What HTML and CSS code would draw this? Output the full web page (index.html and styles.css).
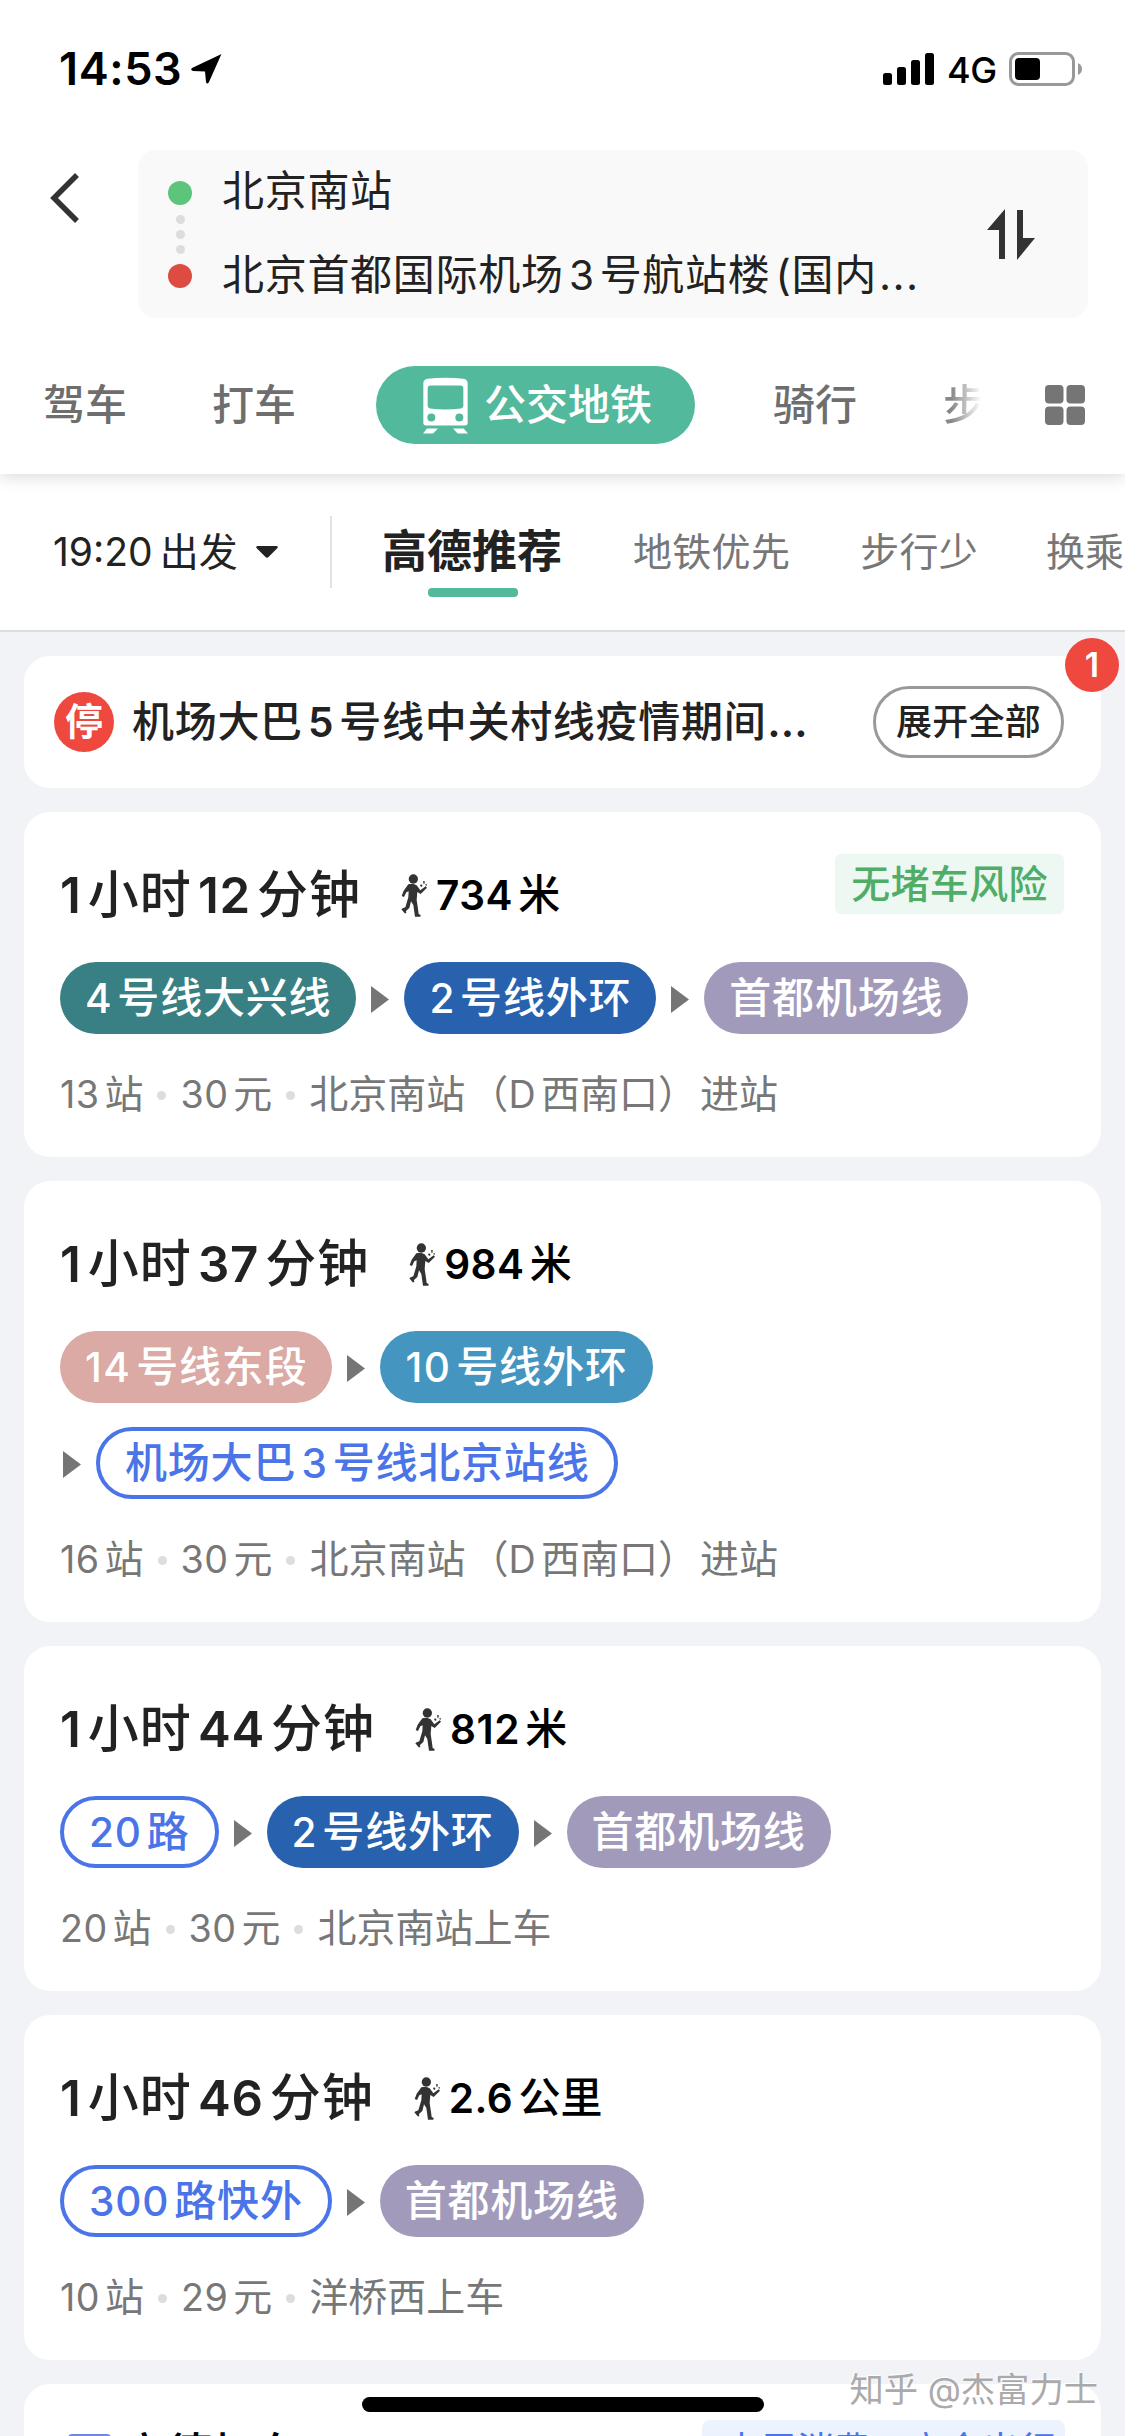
FILE: index.html
```html
<!DOCTYPE html>
<html lang="zh-CN">
<head>
<meta charset="utf-8">
<title>公交地铁路线</title>
<link rel="stylesheet" href="styles.css">
</head>
<body>
<svg class="defs" width="0" height="0">
  <symbol id="walker" viewBox="75 70 81 129">
    <circle cx="112" cy="85" r="14"/>
    <path d="M97 101Q111 96 122 104L133 119 149 107 153 111 134 130 124 124 122 148 126 175 128 190 134 193 133 198H117L112 163 105 152 100 172 90 181 91 188 86 188 76 176 80 173 88 170 97 140 98 122 91 125 84 139 77 136 83 120Z"/>
    <path d="M132 103l4-2 4 5-5 3zM141 92l5-1 0 7-3 3zM147 102l5-3 0 7z"/>
  </symbol>
  <symbol id="next" viewBox="0 0 18 27"><path d="M0 0L18 13.500 0 27Z"/></symbol>
</svg>
<div class="screen">
  <header class="header">
    <div class="status">
      <span class="clock">14:53</span>
      <svg class="loc" viewBox="0 0 31 30"><path d="M30 1Q31 0 29.500 .5L1 14Q-1 16 2 17L14 17.500 15 28Q16 31 18 28Z"/></svg>
      <svg class="signal" viewBox="0 0 51 32"><rect x="0" y="20" width="9" height="12" rx="2.500"/><rect x="14" y="14" width="9" height="18" rx="2.500"/><rect x="28" y="7" width="9" height="25" rx="2.500"/><rect x="42" y="0" width="9" height="32" rx="2.500"/></svg>
      <span class="net">4G</span>
      <svg class="battery" viewBox="0 0 74 34"><rect x="1.500" y="1.500" width="63" height="31" rx="8" fill="none" stroke="#999" stroke-width="3"/><rect x="6" y="6" width="25" height="22" rx="4"/><path d="M69 11Q73 13 73 17T69 23Z" fill="#999"/></svg>
    </div>
    <div class="search">
      <svg class="back" viewBox="0 0 30 50"><path d="M27 2L4 25 27 48" fill="none" stroke="#333" stroke-width="5.500"/></svg>
      <div class="route">
        <div class="dots"><i class="dot green"></i><i class="dot tiny"></i><i class="dot tiny"></i><i class="dot tiny"></i><i class="dot red"></i></div>
        <div class="places">
          <div class="place">北京南站</div>
          <div class="place">北京首都国际机场<span class="n">3</span>号航站楼<span class="paren">(</span>国内<span class="dots3">...</span></div>
        </div>
        <svg class="swap" viewBox="0 0 48 52"><path d="M18 0V50H12V21H0ZM30 1H36V29H48L30 51Z"/></svg>
      </div>
    </div>
    <nav class="modes">
      <span class="mode">驾车</span>
      <span class="mode m2">打车</span>
      <span class="mode active"><svg class="train" viewBox="128 50 135 170"><path fill-rule="evenodd" d="M129 68Q129 57 142 55Q195 48 249 55Q262 57 262 68V187Q262 195 254 195H137Q129 195 129 187ZM150 75Q142 75 142 83V136Q142 143 149 144Q195 150 242 144Q249 143 249 136V83Q249 75 241 75ZM141 171a12 12 0 1 0 24 0a12 12 0 1 0 -24 0ZM225 171a12 12 0 1 0 24 0a12 12 0 1 0 -24 0Z"/><path d="M140 204H173L158 219H128ZM218 204H250L263 219H232Z"/></svg>公交地铁</span>
      <span class="mode m4">骑行</span>
      <span class="mode fade">步</span>
      <svg class="grid" viewBox="0 0 40 40"><rect width="18.500" height="18.500" rx="4"/><rect x="21.500" width="18.500" height="18.500" rx="4"/><rect y="21.500" width="18.500" height="18.500" rx="4"/><rect x="21.500" y="21.500" width="18.500" height="18.500" rx="4"/></svg>
    </nav>
  </header>
  <div class="filters">
    <span class="depart"><span class="n s">19:20</span>出发</span>
    <svg class="caret" viewBox="0 0 22 12"><path d="M2 0H20Q23 0 21 2.500L12.500 11Q11 12.500 9.500 11L1 2.500Q-1 0 2 0Z"/></svg>
    <i class="rule"></i>
    <span class="filter current">高德推荐</span>
    <span class="filter f2">地铁优先</span>
    <span class="filter f3">步行少</span>
    <span class="filter f4">换乘</span>
  </div>
  <main class="list">
    <section class="notice">
      <span class="stop">停</span>
      <span class="notice-text">机场大巴<span class="n">5</span>号线中关村线疫情期间<span class="dots3">...</span></span>
      <span class="expand">展开全部</span>
      <span class="badge">1</span>
    </section>

    <section class="card">
      <div class="head">
        <span class="time"><span class="n s">1</span>小时<span class="n">12</span>分钟</span>
        <svg class="walk"><use href="#walker"/></svg>
        <span class="dist"><span class="n s">734</span>米</span>
        <span class="tag">无堵车风险</span>
      </div>
      <div class="lines">
        <span class="pill line4"><span class="n s">4</span>号线大兴线</span><svg class="next"><use href="#next"/></svg>
        <span class="pill line2"><span class="n s">2</span>号线外环</span><svg class="next"><use href="#next"/></svg>
        <span class="pill airport">首都机场线</span>
      </div>
      <div class="meta"><span><span class="n s">13</span>站</span><i></i><span><span class="n s">30</span>元</span><i></i><span>北京南站<span class="open">（</span><span class="n s">D</span>西南口<span class="close">）</span>进站</span></div>
    </section>

    <section class="card">
      <div class="head">
        <span class="time"><span class="n s">1</span>小时<span class="n">37</span>分钟</span>
        <svg class="walk"><use href="#walker"/></svg>
        <span class="dist"><span class="n s">984</span>米</span>
      </div>
      <div class="lines">
        <span class="pill line14"><span class="n s">14</span>号线东段</span><svg class="next"><use href="#next"/></svg>
        <span class="pill line10"><span class="n s">10</span>号线外环</span>
      </div>
      <div class="lines wrapped">
        <svg class="next"><use href="#next"/></svg>
        <span class="pill bus">机场大巴<span class="n">3</span>号线北京站线</span>
      </div>
      <div class="meta"><span><span class="n s">16</span>站</span><i></i><span><span class="n s">30</span>元</span><i></i><span>北京南站<span class="open">（</span><span class="n s">D</span>西南口<span class="close">）</span>进站</span></div>
    </section>

    <section class="card">
      <div class="head">
        <span class="time"><span class="n s">1</span>小时<span class="n">44</span>分钟</span>
        <svg class="walk"><use href="#walker"/></svg>
        <span class="dist"><span class="n s">812</span>米</span>
      </div>
      <div class="lines">
        <span class="pill bus"><span class="n s">20</span>路</span><svg class="next"><use href="#next"/></svg>
        <span class="pill line2"><span class="n s">2</span>号线外环</span><svg class="next"><use href="#next"/></svg>
        <span class="pill airport">首都机场线</span>
      </div>
      <div class="meta"><span><span class="n s">20</span>站</span><i></i><span><span class="n s">30</span>元</span><i></i><span>北京南站上车</span></div>
    </section>

    <section class="card">
      <div class="head">
        <span class="time"><span class="n s">1</span>小时<span class="n">46</span>分钟</span>
        <svg class="walk"><use href="#walker"/></svg>
        <span class="dist"><span class="n s">2.6</span>公里</span>
      </div>
      <div class="lines">
        <span class="pill bus"><span class="n s">300</span>路快外</span><svg class="next"><use href="#next"/></svg>
        <span class="pill airport">首都机场线</span>
      </div>
      <div class="meta"><span><span class="n s">10</span>站</span><i></i><span><span class="n s">29</span>元</span><i></i><span>洋桥西上车</span></div>
    </section>

    <section class="taxi">
      <i class="taxi-icon"></i>
      <span class="taxi-name">高德打车</span>
      <span class="taxi-tag">本周消费，立今出行</span>
    </section>
  </main>
  <i class="home"></i>
  <span class="mark">知乎 @杰富力士</span>
</div>
</body>
</html>
```
FILE: styles.css
```css
* { box-sizing: border-box; }
body { margin: 0; font-family: Inter, "Noto Sans CJK SC", sans-serif; line-height: 1.2; color: #222; background: #fff; }
i { font-style: normal; }
svg { flex: none; display: block; }
.defs { position: absolute; }
.screen { position: relative; width: 1125px; height: 2436px; overflow: hidden; display: flex; flex-direction: column; white-space: nowrap; }
.n { font-size: .965em; letter-spacing: .5px; margin: 0 .13em; }
.n.s { margin-left: 0; }

/* header */
.header { flex: none; height: 474px; background: #fff; box-shadow: 0 2px 16px rgba(0,0,0,.16); z-index: 1; }
.status { display: flex; align-items: center; height: 138px; padding: 0 42px 0 59px; color: #000; }
.clock { font-size: 45px; font-weight: 600; letter-spacing: .6px; width: 132px; }
.loc { width: 31px; height: 30px; }
.signal { width: 51px; height: 32px; margin-left: auto; }
.net { font-size: 36px; font-weight: 500; width: 48px; margin: 3px 0 0 13px; letter-spacing: -.5px; }
.battery { width: 74px; height: 34px; margin-left: 14px; }
.search { display: flex; padding: 12px 37px 0 50px; }
.back { width: 30px; height: 50px; margin: 23px 58px 0 0; }
.route { flex: 1; height: 168px; display: flex; align-items: center; background: #f9f9f9; border-radius: 18px; padding: 0 53px 0 30px; }
.dots { width: 24px; display: flex; flex-direction: column; align-items: center; gap: 6px; }
.dot { width: 24px; height: 24px; border-radius: 50%; }
.dot.green { background: #5dc47b; margin-bottom: 4px; }
.dot.tiny { width: 9px; height: 9px; background: #ddd; }
.dot.red { background: #dd4c42; margin-top: 4px; }
.places { flex: 1; margin: -3px 0 0 30px; font-size: 42px; letter-spacing: .7px; }
.place { height: 84px; line-height: 84px; }
.paren { margin-left: 5px; }
.dots3 { letter-spacing: 1.5px; margin-left: 2px; }
.swap { width: 48px; height: 52px; margin-top: 2px; fill: #333; }

.modes { display: flex; align-items: center; height: 78px; margin-top: 48px; padding: 0 40px 0 43px; font-size: 42px; color: #6e6e6e; font-weight: 500; }
.m2 { margin-left: 85px; }
.mode.active { display: flex; align-items: center; width: 319px; height: 78px; padding-left: 47px; margin-left: 80px; border-radius: 39px; background: #52b99c; color: #fff; }
.train { width: 45px; height: 57px; fill: #fff; margin-right: 16px; }
.m4 { margin-left: 78px; }
.fade { width: 42px; margin-left: 86px; background: linear-gradient(90deg, #888 20%, #fff 92%); -webkit-background-clip: text; background-clip: text; color: transparent; }
.grid { width: 40px; height: 40px; margin-left: auto; fill: #757575; }

/* filters */
.filters { flex: none; display: flex; align-items: center; height: 158px; padding: 0 0 0 53px; font-size: 39px; border-bottom: 2px solid #dcdddf; }
.filters > * { flex: none; }
.depart { width: 185px; }
.depart .n { font-size: 1em; letter-spacing: 0; margin-right: .18em; }
.caret { width: 22px; height: 12px; margin-left: 18px; fill: #222; }
.rule { width: 2px; height: 72px; margin-left: 52px; background: #e2e2e2; }
.filter { color: #777; letter-spacing: .3px; }
.current { position: relative; margin-left: 50px; width: 180px; line-height: 54px; font-size: 45px; font-weight: 600; color: #222; letter-spacing: 0; }
.current::after { content: ""; position: absolute; left: 46px; bottom: -18px; width: 90px; height: 9px; border-radius: 4px; background: #52b99c; }
.f2 { margin-left: 71px; }
.f3 { margin-left: 70px; }
.f4 { margin-left: 68px; letter-spacing: 0; }

/* result list */
.list { flex: 1; display: flex; flex-direction: column; gap: 24px; padding: 24px 24px 0; background: #f2f3f7; }
.notice, .card, .taxi { flex: none; background: #fff; border-radius: 26px; }
.notice { position: relative; display: flex; align-items: center; height: 132px; padding: 0 37px 0 30px; }
.stop { width: 60px; height: 60px; line-height: 58px; border-radius: 50%; background: #ee483f; color: #fff; text-align: center; font-size: 38px; font-weight: 700; }
.notice-text { margin-left: 18px; font-size: 42px; letter-spacing: .7px; font-weight: 500; }
.notice-text .n { font-weight: 600; }
.notice-text .dots3 { letter-spacing: 0; margin-left: 1px; font-weight: 600; }
.expand { margin-left: auto; width: 191px; height: 72px; line-height: 66px; border: 3px solid #999; border-radius: 36px; text-align: center; font-size: 36px; font-weight: 500; letter-spacing: .3px; }
.badge { position: absolute; right: -18px; top: -18px; width: 54px; height: 54px; line-height: 54px; border-radius: 50%; background: #ee483f; color: #fff; text-align: center; font-size: 34px; font-weight: 600; }
.card { padding: 42px 37px 39px 36px; }
.head { position: relative; display: flex; align-items: center; height: 82px; }
.head .n { font-weight: 600; }
.time { font-size: 51px; font-weight: 500; letter-spacing: 1px; }
.time .n { letter-spacing: .5px; margin-right: .13em; }
.walk { width: 27px; height: 43px; margin-left: 40px; fill: #333; }
.dist { margin-left: 8px; font-size: 42px; font-weight: 500; color: #000; }
.tag { align-self: flex-start; margin-left: auto; width: 229px; height: 60px; line-height: 60px; border-radius: 6px; background: #edf8f2; color: #50ad68; text-align: center; font-size: 39px; font-weight: 500; letter-spacing: .3px; }
.lines { display: flex; align-items: center; height: 72px; margin-top: 26px; }
.wrapped { margin-top: 24px; padding-left: 3px; }
.pill { height: 72px; line-height: 72px; padding: 0 25px; border-radius: 36px; color: #fff; font-size: 42px; font-weight: 500; letter-spacing: .8px; }
.pill .n { letter-spacing: .9px; margin-right: .12em; }
.line14 .n, .line10 .n { letter-spacing: 1.5px; }
.next { width: 18px; height: 27px; margin: 2px 15px 0; fill: #757575; }
.wrapped .next { margin-left: 0; }
.line4 { background: #388083; }
.line2 { background: #2862ae; }
.airport { background: #a29abb; }
.line14 { background: #dbaaa5; }
.line10 { background: #4496c0; }
.bus { border: 4px solid #4a74e8; color: #4a74e8; line-height: 64px; background: #fff; }
.meta { display: flex; align-items: center; height: 48px; margin-top: 36px; font-size: 39px; color: #777; }
.meta i { width: 9px; height: 9px; border-radius: 50%; background: #ddd; margin: 3px 14px 0 14px; }
.open { margin-left: 4px; }
.close { margin-right: 3px; }

/* taxi offer, partly below the fold */
.taxi { display: flex; height: 160px; padding: 36px 36px 0 44px; }
.taxi-icon { width: 43px; height: 40px; margin-top: 14px; border-radius: 4px; background: #6f89e0; }
.taxi-name { margin-left: 11px; font-size: 45px; line-height: 70px; font-weight: 500; color: #000; }
.taxi-tag { margin-left: auto; width: 363px; height: 60px; line-height: 61px; padding-left: 21px; overflow: hidden; border-radius: 8px; background: #edf3fe; color: #4a74e8; font-size: 37px; }

.home { position: absolute; left: 362px; top: 2397px; width: 402px; height: 15px; border-radius: 8px; background: #000; }
.mark { position: absolute; right: 27px; top: 2366px; font-size: 34.300px; line-height: 48px; color: #aaa; text-shadow: -1px -1px 1px #fff; }
```
